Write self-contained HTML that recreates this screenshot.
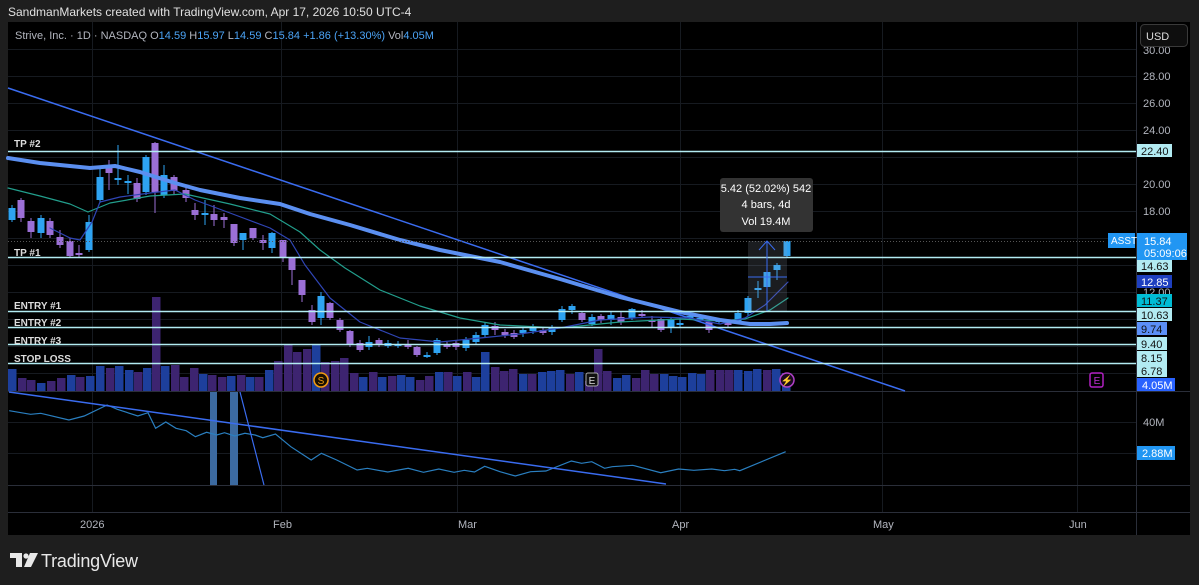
<!DOCTYPE html>
<html><head><meta charset="utf-8"><style>
html,body{margin:0;padding:0;background:#1e1e1e;width:1199px;height:585px;overflow:hidden;font-family:"Liberation Sans",sans-serif}
svg{position:absolute;left:0;top:0}
</style></head><body>
<svg id="s" width="1199" height="585" xmlns="http://www.w3.org/2000/svg" font-family="Liberation Sans, sans-serif">
<rect x="0" y="0" width="1199" height="585" fill="#1e1e1e"/>
<text x="8" y="16" fill="#e0e0e0" font-size="12">SandmanMarkets created with TradingView.com, Apr 17, 2026 10:50 UTC-4</text>
<rect x="8" y="22" width="1182" height="513" fill="#000"/>
<g id="grid" stroke="#161a20" stroke-width="1"></g>
<line x1="1136.5" y1="22" x2="1136.5" y2="535" stroke="#2a2e39"/>
<line x1="8" y1="391.5" x2="1190" y2="391.5" stroke="#2a2e39"/>
<line x1="8" y1="485.5" x2="1190" y2="485.5" stroke="#2a2e39"/>
<line x1="8" y1="512.5" x2="1190" y2="512.5" stroke="#2a2e39"/>
<text x="15" y="39" font-size="11" fill="#b2b5be">Strive, Inc. · 1D · NASDAQ  <tspan fill="#b2b5be">O</tspan><tspan fill="#4ba3f5">14.59</tspan> <tspan>H</tspan><tspan fill="#4ba3f5">15.97</tspan> <tspan>L</tspan><tspan fill="#4ba3f5">14.59</tspan> <tspan>C</tspan><tspan fill="#4ba3f5">15.84</tspan> <tspan fill="#4ba3f5">+1.86 (+13.30%)</tspan> <tspan>Vol</tspan><tspan fill="#4ba3f5">4.05M</tspan></text>
<g id="vol"></g>
<g id="lower"></g>
<g id="main"></g>
<g id="labels"></g>
<rect x="1140.5" y="24.5" width="47" height="22" rx="4" fill="#0e0e0e" stroke="#3a3a3a"/>
<text x="1146" y="40" font-size="11" fill="#ddd">USD</text>
</svg>
<script>
const NS="http://www.w3.org/2000/svg";
function el(p,t,a,txt){const e=document.createElementNS(NS,t);for(const k in a)e.setAttribute(k,a[k]);if(txt!=null)e.textContent=txt;document.getElementById(p).appendChild(e);return e;}
[92,281,457,680,882,1077].forEach(x=>el('grid','line',{x1:x+.5,y1:22,x2:x+.5,y2:512}));
[49,76,103,130,157,184,211,238,265,292,319,346,373,422,453].forEach(y=>el('grid','line',{x1:8,y1:y+.5,x2:1136,y2:y+.5}));
[[28,76],[26,103],[24,130],[20,184],[18,211]].forEach(a=>el('labels','text',{x:1143,y:a[1]+4,'font-size':11,fill:'#b2b5be'},a[0].toFixed(2)));
el('labels','text',{x:1143,y:54,'font-size':11,fill:'#b2b5be'},'30.00');
el('labels','text',{x:1143,y:296,'font-size':11,fill:'#b2b5be'},'12.00');
el('labels','text',{x:1143,y:426,'font-size':11,fill:'#b2b5be'},'40M');
[['2026',80],['Feb',273],['Mar',458],['Apr',672],['May',873],['Jun',1069]].forEach(a=>el('labels','text',{x:a[1],y:528,'font-size':11,fill:'#b2b5be'},a[0]));
const vols=[[12,369,'b'],[22,378,'p'],[31,380,'p'],[41,383,'b'],[51,381,'p'],[61,378,'p'],[71,375,'b'],[80,377,'p'],[90,376,'b'],[100,366,'b'],[110,368,'p'],[119,366,'b'],[129,370,'b'],[138,372,'p'],[147,368,'b'],[156,297,'p'],[165,366,'b'],[175,365,'p'],[184,377,'p'],[194,368,'p'],[203,374,'b'],[212,375,'p'],[222,377,'p'],[231,376,'b'],[241,375,'p'],[250,377,'b'],[259,377,'p'],[269,370,'b'],[278,361,'p'],[288,345,'p'],[297,352,'p'],[307,349,'p'],[316,345,'b'],[325,362,'p'],[335,361,'p'],[344,358,'p'],[354,373,'p'],[363,377,'b'],[373,372,'p'],[382,377,'b'],[392,376,'p'],[401,375,'b'],[410,377,'b'],[420,380,'p'],[429,376,'p'],[439,372,'b'],[448,372,'p'],[457,376,'b'],[467,372,'p'],[476,377,'b'],[485,352,'b'],[495,367,'p'],[504,371,'p'],[513,369,'p'],[523,374,'b'],[532,374,'p'],[542,372,'b'],[551,371,'b'],[560,370,'b'],[570,374,'p'],[579,372,'b'],[589,381,'p'],[598,349,'p'],[607,371,'p'],[617,378,'b'],[626,375,'b'],[636,378,'p'],[645,370,'p'],[654,374,'p'],[664,374,'b'],[673,376,'b'],[682,377,'b'],[692,373,'b'],[701,374,'b'],[710,370,'p'],[720,370,'p'],[729,370,'p'],[738,370,'b'],[748,371,'b'],[757,369,'b'],[767,370,'p'],[776,369,'b'],[786,373,'b']];
vols.forEach(v=>el('vol','rect',{x:v[0]-4,y:v[1],width:8.5,height:391-v[1],fill:v[2]=='b'?'#1d3f9c':'#3d2470'}));
const C=[[12,208,220,205,222,'b'],[21,200,218,198,222,'p'],[31,221,232,218,238,'p'],[41,218,233,215,238,'b'],[50,221,235,218,238,'p'],[60,237,245,230,248,'p'],[70,241,256,238,257,'p'],[79,253,255,245,257,'p'],[89,222,250,215,252,'b'],[100,177,200,168,203,'b'],[109,165,173,160,190,'p'],[118,178,179,145,185,'b'],[128,181,182,175,194,'b'],[137,183,199,178,202,'p'],[146,157,192,155,195,'b'],[155,143,192,142,213,'p'],[164,175,195,165,198,'b'],[174,177,191,175,194,'p'],[186,190,198,188,202,'p'],[195,210,215,203,220,'p'],[205,213,214,200,225,'b'],[214,214,220,205,226,'p'],[224,217,220,213,228,'p'],[234,224,243,224,246,'p'],[243,233,240,233,250,'b'],[253,228,238,228,240,'p'],[263,240,243,235,250,'p'],[272,233,248,232,253,'b'],[283,240,258,240,262,'p'],[292,258,270,258,285,'p'],[302,280,295,280,302,'p'],[312,310,322,305,325,'p'],[321,296,318,292,325,'b'],[330,303,318,302,320,'p'],[340,320,330,318,332,'p'],[350,331,345,330,347,'p'],[360,343,350,340,352,'p'],[369,342,347,336,350,'b'],[379,340,345,338,347,'p'],[388,343,346,340,348,'b'],[398,344,346,341,348,'b'],[408,345,347,340,349,'p'],[417,347,355,346,357,'p'],[427,355,356,352,358,'b'],[437,340,353,338,355,'b'],[447,344,347,342,349,'p'],[456,343,347,340,350,'p'],[466,340,348,337,351,'b'],[476,335,342,332,344,'b'],[485,325,335,322,338,'b'],[495,326,330,322,335,'p'],[505,332,335,329,338,'p'],[514,333,337,330,339,'p'],[523,330,333,327,337,'b'],[533,327,331,324,334,'b'],[543,330,333,327,335,'p'],[552,327,332,325,335,'b'],[562,309,320,306,322,'b'],[572,306,310,304,314,'b'],[582,313,320,311,322,'p'],[592,317,324,314,326,'b'],[601,316,320,314,323,'p'],[611,315,320,311,325,'b'],[621,317,322,312,325,'p'],[632,309,318,308,320,'b'],[642,314,316,310,318,'p'],[652,320,322,316,328,'p'],[661,319,330,318,332,'p'],[671,320,328,318,333,'b'],[680,323,325,318,327,'b'],[690,316,318,314,320,'b'],[700,318,320,315,322,'b'],[709,322,330,320,333,'p'],[719,320,322,318,324,'b'],[728,322,325,320,327,'p'],[738,313,323,310,324,'b'],[748,298,313,296,316,'b'],[758,288,290,281,298,'b'],[767,272,287,270,305,'b'],[777,265,270,263,280,'b'],[787,241,256,241,257,'b']];
C.forEach(c=>{const col=c[5]=='b'?'#2ea3f2':'#9b6fd6';el('main','line',{x1:c[0],y1:c[3],x2:c[0],y2:c[4],stroke:col,'stroke-width':1});el('main','rect',{x:c[0]-3.5,y:c[1],width:7,height:Math.max(2,c[2]-c[1]),fill:col});});
function pl(pts,col,w){el('main','polyline',{points:pts.map(p=>p.join(',')).join(' '),fill:'none',stroke:col,'stroke-width':w,'stroke-linejoin':'round','stroke-linecap':'round'});}
el('main','line',{x1:8,y1:88,x2:905,y2:391,stroke:'#3a6cf0','stroke-width':1.5});
pl([[8,188],[40,196],[70,204],[88,212],[110,203],[150,196],[185,194],[230,204],[270,214],[300,232],[320,250],[345,268],[380,290],[420,306],[460,318],[500,325],[560,328],[620,322],[680,319],[720,321],[745,319],[770,310],[788,298]],'#229e8c',1.2);
pl([[50,228],[70,238],[80,240],[92,222],[100,202],[120,197],[150,193],[175,190],[195,200],[230,213],[270,228],[290,240],[305,265],[330,298],[360,322],[400,338],[440,342],[480,338],[520,334],[560,328],[600,320],[650,317],[690,318],[720,324],[745,318],[765,305],[788,282]],'#2f45b5',1.2);
pl([[8,158],[40,163],[90,168],[115,166],[140,172],[175,183],[200,190],[240,198],[280,204],[310,214],[350,225],[400,240],[440,250],[500,262],[560,279],[620,297],[680,312],[720,320],[750,324],[770,324],[787,323]],'#5b8ff0',4);
[[151,'TP #2',143],[257,'TP #1',252],[311,'ENTRY #1',305],[327,'ENTRY #2',322],[344,'ENTRY #3',340],[363,'STOP LOSS',358]].forEach(l=>{el('main','line',{x1:8,y1:l[0]+.5,x2:1136,y2:l[0]+.5,stroke:'#b2ebf2','stroke-width':1.5});el('labels','text',{x:14,y:l[2]+4,'font-size':10,'font-weight':'bold',fill:'#ddd'},l[1]);});
el('main','line',{x1:8,y1:241.5,x2:1106,y2:241.5,stroke:'#555','stroke-width':1,'stroke-dasharray':'1,2'});
el('main','rect',{x:748,y:241,width:39,height:70,fill:'rgba(150,160,180,0.18)'});
el('main','line',{x1:748,y1:277,x2:787,y2:277,stroke:'#3a6cf0','stroke-width':1});
el('main','line',{x1:767,y1:311,x2:767,y2:241,stroke:'#3a6cf0','stroke-width':1});
el('main','polyline',{points:'759,250 767,241 775,250',fill:'none',stroke:'#3a6cf0','stroke-width':1});
el('main','rect',{x:720,y:178,width:93,height:54,rx:3,fill:'#333'});
[['5.42 (52.02%) 542',192],['4 bars, 4d',208],['Vol 19.4M',225]].forEach(t=>el('labels','text',{x:766,y:t[1],'font-size':11,fill:'#fff','text-anchor':'middle'},t[0]));
el('labels','circle',{cx:321,cy:380,r:7,fill:'#1a1000',stroke:'#f39c12','stroke-width':1.5});
el('labels','text',{x:321,y:384,'font-size':10,fill:'#f39c12','text-anchor':'middle'},'S');
el('labels','rect',{x:586,y:373,width:12,height:13,rx:2,fill:'#111',stroke:'#aaa'});
el('labels','text',{x:592,y:384,'font-size':10,fill:'#ddd','text-anchor':'middle'},'E');
el('labels','circle',{cx:787,cy:380,r:7,fill:'#1a0a20',stroke:'#b040c8','stroke-width':1.5});
el('labels','text',{x:787,y:384,'font-size':10,fill:'#d060e0','text-anchor':'middle'},'⚡');
el('labels','rect',{x:1090,y:373,width:13,height:14,rx:2,fill:'none',stroke:'#b020c0','stroke-width':1.5});
el('labels','text',{x:1097,y:384,'font-size':10,fill:'#c030d0','text-anchor':'middle'},'E');
el('lower','rect',{x:210,y:392,width:7,height:93,fill:'#3c6aa0'});
el('lower','rect',{x:230,y:392,width:8,height:93,fill:'#3c6aa0'});
const lz=[[18,92],[60,103],[80,100],[135,120],[165,108],[210,75],[230,88],[270,108],[290,98],[305,145],[325,126],[345,145],[365,152],[383,170],[405,157],[425,165],[440,158],[460,168],[480,160],[500,165],[515,173],[540,162],[570,200],[610,240],[630,220],[660,240],[700,270],[720,265],[760,276],[800,265],[830,277],[860,267],[890,277],[910,271],[930,276],[950,259],[980,275],[1010,288],[1040,275],[1070,273],[1120,243],[1140,250],[1160,245],[1185,265],[1200,260],[1240,256],[1295,278],[1330,267],[1360,271],[1395,267],[1420,272],[1440,268],[1450,272],[1540,215]];
el('lower','polyline',{points:lz.map(p=>(p[0]/1.96).toFixed(1)+','+(380+p[1]/3).toFixed(1)).join(' '),fill:'none',stroke:'#2a7fc0','stroke-width':1.2});
el('lower','line',{x1:9,y1:392,x2:666,y2:484,stroke:'#3a6cf0','stroke-width':1.5});
el('lower','line',{x1:240,y1:392,x2:264,y2:485,stroke:'#3a6cf0','stroke-width':1.2});
[[22.40,151,'#b2ebf2','#111'],[14.63,266,'#b2ebf2','#111'],[12.85,282,'#1e3fbf','#fff'],[11.37,301,'#00bcd4','#111'],[10.63,315,'#b2ebf2','#111'],[9.74,329,'#5b8ff7','#111'],[9.40,344,'#b2ebf2','#111'],[8.15,358,'#b2ebf2','#111'],[6.78,371,'#b2ebf2','#111']].forEach(a=>{el('labels','rect',{x:1137,y:a[1]-7,width:(a[0]>=10?35:30),height:13,fill:a[2]});el('labels','text',{x:1141,y:a[1]+4,'font-size':11,fill:a[3]},a[0].toFixed(2));});
el('labels','rect',{x:1137,y:233,width:50,height:27,fill:'#2196f3'});
el('labels','text',{x:1144,y:245,'font-size':11,fill:'#fff'},'15.84');
el('labels','text',{x:1144,y:257,'font-size':11,fill:'#fff'},'05:09:06');
el('labels','rect',{x:1108,y:233,width:27,height:15,fill:'#2196f3'});
el('labels','text',{x:1111,y:244,'font-size':10,fill:'#fff'},'ASST');
el('labels','rect',{x:1137,y:378,width:38,height:13,fill:'#2962ff'});
el('labels','text',{x:1142,y:389,'font-size':11,fill:'#fff'},'4.05M');
el('labels','rect',{x:1137,y:446,width:38,height:14,fill:'#2196f3'});
el('labels','text',{x:1142,y:457,'font-size':11,fill:'#fff'},'2.88M');
</script>
<svg width="1199" height="585" style="position:absolute;left:0;top:0;pointer-events:none" xmlns="http://www.w3.org/2000/svg">
<g fill="#e8e8e8">
<rect x="10" y="553" width="12" height="5"/><rect x="16" y="553" width="6" height="14"/>
<circle cx="26" cy="556" r="2.6"/><polygon points="30,553 38,553 31,567 24,567"/>
</g>
<text x="41" y="567" font-family="Liberation Sans, sans-serif" font-size="18" fill="#e8e8e8" letter-spacing="-0.2">TradingView</text>
</svg>
</body></html>
